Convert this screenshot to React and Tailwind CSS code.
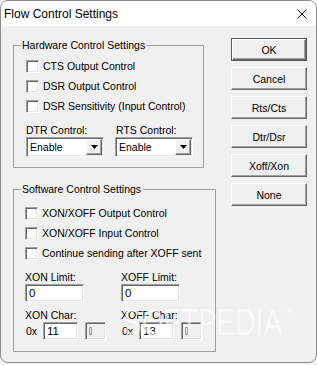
import React from 'react';

const sunken =
  'border border-t-[#a0a0a0] border-l-[#a0a0a0] border-r-white border-b-white shadow-[inset_1px_1px_0_#696969,inset_-1px_-1px_0_#e3e3e3]';
const raised =
  'border border-t-white border-l-white border-r-[#696969] border-b-[#696969] shadow-[inset_-1px_-1px_0_#a0a0a0] bg-[#f0f0f0]';

function Check({ label }) {
  return (
    <div className="flex h-[20px] items-center">
      <span className={`h-[13px] w-[13px] shrink-0 bg-white ${sunken}`} />
      <span className="ml-[4px] whitespace-nowrap">{label}</span>
    </div>
  );
}

function Combo() {
  return (
    <div className={`mt-[1px] flex h-[20px] w-[78px] items-center bg-white p-[1px] ${sunken}`}>
      <span className="flex-1 pl-[2px]">Enable</span>
      <span className={`flex h-[16px] w-[16px] items-center justify-center ${raised}`}>
        <svg width="7" height="4" viewBox="0 0 7 4">
          <path d="M0 0H7L3.5 4Z" fill="#000" />
        </svg>
      </span>
    </div>
  );
}

function Field({ value, w }) {
  return (
    <div className={`flex h-[18px] items-center bg-white pl-[3px] text-[11.5px] ${w} ${sunken}`}>{value}</div>
  );
}

function CharRow({ value }) {
  return (
    <div className="mt-[1px] flex h-[18px] items-center">
      <span className="w-[18px] pl-[1px]">0x</span>
      <Field value={value} w="w-[35px]" />
      <div className={`ml-[7px] flex h-[18px] w-[21px] items-center bg-[#f0f0f0] pl-[3px] ${sunken}`}>
        <span className="h-[8px] w-[3px] border border-[#8fa5ab]" />
      </div>
    </div>
  );
}

function Btn({ children, primary }) {
  if (primary) {
    return (
      <div className="h-[23px] w-[76px] border border-[#5a5a5a]">
        <div className={`flex h-full items-center justify-center ${raised}`}>{children}</div>
      </div>
    );
  }
  return <div className={`flex h-[23px] w-[76px] items-center justify-center ${raised}`}>{children}</div>;
}

export default function App() {
  return (
    <div className="h-[365px] w-[317px] bg-[#f3f3f3] font-['Liberation_Sans',Arial,sans-serif] text-[10.5px] leading-[12px] text-black">
      <div className="relative flex h-[363px] flex-col overflow-hidden rounded-[8px] border border-[#8c8c8c] bg-[#f0f0f0]">
        <div className="flex h-[25px] shrink-0 items-center justify-between bg-white pl-[3px] pr-[9px]">
          <span className="text-[12px] leading-[14px]">Flow Control Settings</span>
          <svg width="10" height="10" viewBox="0 0 10 10">
            <path d="M0.5 0.5L9.5 9.5M9.5 0.5L0.5 9.5" stroke="#000" strokeWidth="1" />
          </svg>
        </div>

        <div className="flex pl-[12px]">
          <div className="w-[203px]">
            <fieldset className="mt-[13px] w-[191px] border border-[#a0a0a0]">
              <legend className="ml-[7px] pl-[1px] pr-[2px] leading-[12px]">Hardware Control Settings</legend>
              <div className="pl-[12px] pt-[5px] pb-[10px]">
                <Check label="CTS Output Control" />
                <Check label="DSR Output Control" />
                <Check label="DSR Sensitivity (Input Control)" />
                <div className="mt-[8px] flex">
                  <div className="w-[89px]">
                    <div>DTR Control:</div>
                    <Combo />
                  </div>
                  <div>
                    <div className="pl-[1px]">RTS Control:</div>
                    <Combo />
                  </div>
                </div>
              </div>
            </fieldset>

            <fieldset className="mt-[15px] w-[203px] border border-[#a0a0a0]">
              <legend className="ml-[7px] pl-[1px] pr-[2px] leading-[12px]">Software Control Settings</legend>
              <div className="pl-[11px] pt-[8px] pb-[11px]">
                <Check label="XON/XOFF Output Control" />
                <Check label="XON/XOFF Input Control" />
                <Check label="Continue sending after XOFF sent" />
                <div className="mt-[8px] flex">
                  <div className="w-[96px]">
                    <div>XON Limit:</div>
                    <div className="mt-[1px]">
                      <Field value="0" w="w-[59px]" />
                    </div>
                  </div>
                  <div>
                    <div>XOFF Limit:</div>
                    <div className="mt-[1px]">
                      <Field value="0" w="w-[59px]" />
                    </div>
                  </div>
                </div>
                <div className="mt-[7px] flex">
                  <div className="w-[96px]">
                    <div>XON Char:</div>
                    <CharRow value="11" />
                  </div>
                  <div>
                    <div>XOFF Char:</div>
                    <CharRow value="13" />
                  </div>
                </div>
              </div>
            </fieldset>
          </div>

          <div className="ml-[15px] mt-[12px] flex flex-col gap-[6px]">
            <Btn primary>OK</Btn>
            <Btn>Cancel</Btn>
            <Btn>Rts/Cts</Btn>
            <Btn>Dtr/Dsr</Btn>
            <Btn>Xoff/Xon</Btn>
            <Btn>None</Btn>
          </div>
        </div>

        <div className="pointer-events-none absolute left-[122px] top-[304px] flex items-start text-[36px] leading-[36px] text-white opacity-60 [text-shadow:0_0_1px_rgba(0,0,0,0.06)]">
          <span className="origin-left scale-x-[0.78]">SOFTPEDIA</span>
        </div>
        <span className="pointer-events-none absolute left-[285px] top-[307px] text-[8px] leading-[8px] text-white opacity-70">®</span>
      </div>
    </div>
  );
}
